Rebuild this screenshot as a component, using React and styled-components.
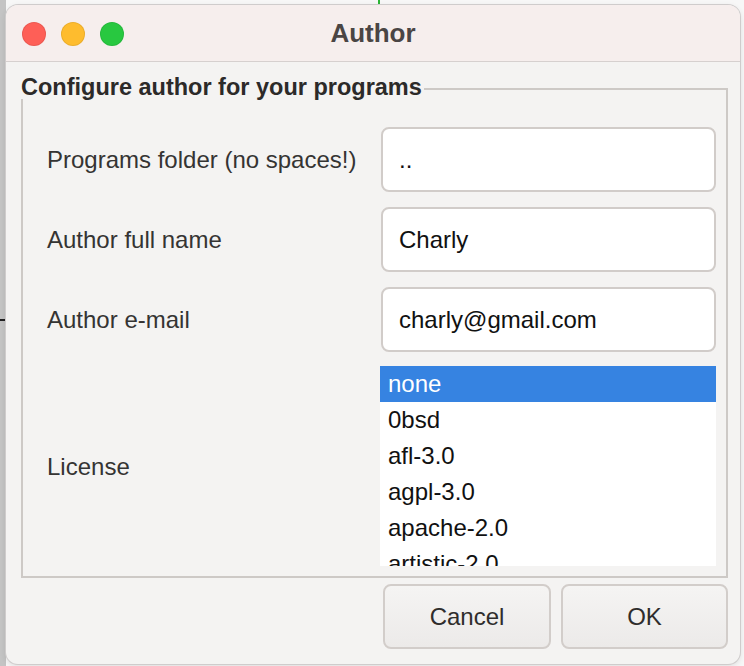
import React from 'react';
import styled, { createGlobalStyle } from 'styled-components';

const GlobalStyle = createGlobalStyle`
  html, body {
    margin: 0;
    padding: 0;
    background: #f7f7f7;
    font-family: "Liberation Sans", Arial, sans-serif;
  }
`;

const Desktop = styled.div`
  position: relative;
  width: 744px;
  height: 666px;
  overflow: hidden;
  background: linear-gradient(to right, #c4c4c4 0, #c4c4c4 6px, #f7f7f7 6px);
  padding: 5px 4px 0 6px;
  box-sizing: border-box;
`;

const Guide = styled.div`
  position: absolute;
  background: ${({ $color }) => $color};
`;

const Window = styled.div`
  width: 734px;
  height: 659px;
  border-radius: 12px;
  background: #f4f3f2;
  box-shadow: 0 0 0 1px #cfcccc, 0 2px 6px rgba(0, 0, 0, 0.12);
  display: flex;
  flex-direction: column;
  overflow: hidden;
  position: relative;
`;

const TitleBar = styled.div`
  height: 56px;
  flex: none;
  background: #f6eeed;
  border-bottom: 1px solid #d6d0cf;
  display: flex;
  align-items: center;
  justify-content: center;
  position: relative;
`;

const Lights = styled.div`
  position: absolute;
  left: 16px;
  top: 17px;
  display: flex;
  gap: 15px;
`;

const Light = styled.span`
  width: 24px;
  height: 24px;
  border-radius: 50%;
  background: ${({ $color }) => $color};
  box-shadow: inset 0 0 0 1px rgba(0, 0, 0, 0.08);
`;

const Title = styled.div`
  font-size: 26px;
  font-weight: 700;
  color: #4a4544;
  margin-top: 1px;
`;

const Body = styled.div`
  flex: 1;
  padding: 13px 12px 0 15px;
  display: flex;
  flex-direction: column;
`;

const GroupHeader = styled.div`
  display: flex;
  height: 24px;
`;

const GroupTitle = styled.div`
  font-size: 23.5px;
  font-weight: 700;
  line-height: 24px;
  color: #2c2a29;
  white-space: nowrap;
`;

const GroupLine = styled.div`
  flex: 1;
  margin-top: 13px;
  margin-left: 2px;
  border-top: 2px solid #cdc9c6;
  border-right: 2px solid #cdc9c6;
`;

const GroupBox = styled.div`
  border: 2px solid #cdc9c6;
  border-top: none;
  padding: 28px 10px 10px 24px;
  display: grid;
  grid-template-columns: 1fr 336px;
  row-gap: 15px;
  align-items: center;
`;

const Label = styled.div`
  font-size: 24px;
  color: #353433;
`;

const Field = styled.div`
  height: 61px;
  background: #ffffff;
  border: 2px solid #d1ccc9;
  border-radius: 8px;
  display: flex;
  align-items: center;
  padding: 0 16px;
  font-size: 24px;
  color: #111;
  margin-left: 1px;
`;

const List = styled.div`
  height: 200px;
  margin-top: -1px;
  background: #ffffff;
  overflow: hidden;
`;

const Item = styled.div`
  height: 36px;
  line-height: 36px;
  padding-left: 8px;
  font-size: 24px;
  color: ${({ $selected }) => ($selected ? '#ffffff' : '#111')};
  background: ${({ $selected }) => ($selected ? '#3683e1' : 'transparent')};
`;

const Buttons = styled.div`
  display: flex;
  justify-content: flex-end;
  gap: 10px;
  margin-top: 6px;
`;

const Button = styled.button`
  width: ${({ $w }) => $w}px;
  height: 65px;
  border-radius: 8px;
  border: 2px solid #d2cdca;
  background: linear-gradient(#f5f4f3, #eceae9);
  font-family: "Liberation Sans", Arial, sans-serif;
  font-size: 24px;
  color: #2f2d2c;
  cursor: pointer;
`;

const fields = [
  { label: 'Programs folder (no spaces!)', value: '..' },
  { label: 'Author full name', value: 'Charly' },
  { label: 'Author e-mail', value: 'charly@gmail.com' },
];

const licenses = ['none', '0bsd', 'afl-3.0', 'agpl-3.0', 'apache-2.0', 'artistic-2.0'];

export default function App() {
  return (
    <>
      <GlobalStyle />
      <Desktop>
        <Guide $color="#2bb534" style={{ left: 378, top: 0, width: 2, height: 5 }} />
        <Guide $color="#222" style={{ left: 0, top: 319, width: 6, height: 2 }} />
        <Window>
          <TitleBar>
            <Lights>
              <Light $color="#fe5f57" />
              <Light $color="#febc2e" />
              <Light $color="#28c840" />
            </Lights>
            <Title>Author</Title>
          </TitleBar>
          <Body>
            <GroupHeader>
              <GroupTitle>Configure author for your programs</GroupTitle>
              <GroupLine />
            </GroupHeader>
            <GroupBox>
              {fields.map((f) => (
                <React.Fragment key={f.label}>
                  <Label>{f.label}</Label>
                  <Field>{f.value}</Field>
                </React.Fragment>
              ))}
              <Label>License</Label>
              <List>
                {licenses.map((l, i) => (
                  <Item key={l} $selected={i === 0}>{l}</Item>
                ))}
              </List>
            </GroupBox>
            <Buttons>
              <Button $w={168}>Cancel</Button>
              <Button $w={167}>OK</Button>
            </Buttons>
          </Body>
        </Window>
      </Desktop>
    </>
  );
}
